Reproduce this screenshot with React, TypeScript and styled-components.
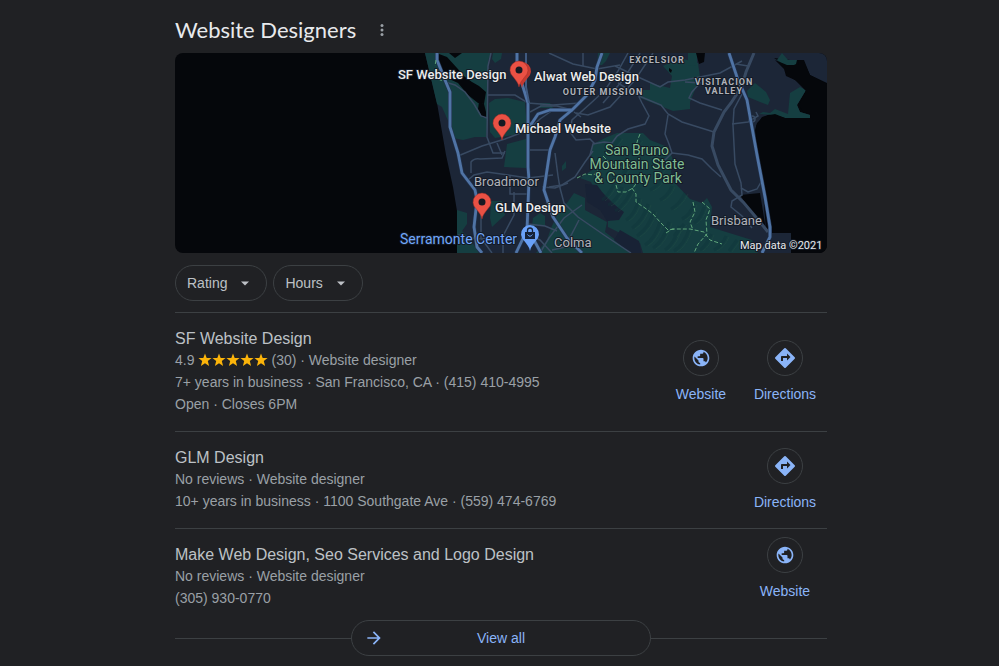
import React from "react";
import styled, { createGlobalStyle } from "styled-components";

const GlobalStyle = createGlobalStyle`
  * { box-sizing: border-box; }
  body {
    margin: 0;
    background: #202124;
    color: #bdc1c6;
    font-family: "Liberation Sans", Arial, sans-serif;
    font-size: 14px;
  }
`;

const Page = styled.main`
  margin: 0 172px 0 175px;
  padding: 12px 0 10px;
`;

const Header = styled.header`
  display: flex;
  align-items: center;
  gap: 14px;
  height: 36px;
  margin-bottom: 5px;
`;

const Heading = styled.h1`
  margin: 0;
  color: #e8eaed;
  font: 400 22px/36px "Google Sans", Lato, sans-serif;
`;

const MenuButton = styled.button`
  display: flex;
  align-items: center;
  justify-content: center;
  width: 24px;
  height: 24px;
  padding: 0;
  border: 0;
  background: none;
  color: #9aa0a6;
`;

const MapFrame = styled.section`
  height: 200px;
  overflow: hidden;
  border-radius: 8px;
  background: #05070b;
`;

const MapSvg = styled.svg`
  display: block;
  width: 100%;
  height: 100%;
  font-family: Roboto, sans-serif;
`;

const Filters = styled.div`
  display: flex;
  gap: 6px;
  padding: 12px 0 11px;
`;

const FilterChip = styled.button`
  display: flex;
  align-items: center;
  gap: 13px;
  height: 36px;
  padding: 0 16px 0 11px;
  border: 1px solid #3c4043;
  border-radius: 18px;
  background: none;
  color: #bdc1c6;
  font: inherit;
`;

const List = styled.ul`
  margin: 0;
  padding: 0;
  list-style: none;
`;

const Row = styled.li`
  display: flex;
  align-items: center;
  border-top: 1px solid #3c4043;
`;

const Info = styled.div<{ $last: boolean }>`
  flex: 1;
  padding: 16px 0 ${(p) => (p.$last ? 0 : 16)}px;
  color: #9aa0a6;
  line-height: 22px;
`;

const Name = styled.h2`
  margin: 0;
  color: #bdc1c6;
  font-size: 16px;
  font-weight: 400;
  line-height: 20px;
`;

const Line = styled.div`
  display: flex;
  align-items: center;
  height: 22px;
  white-space: pre;
`;

const Stars = styled.span`
  display: flex;
  margin: 0 3px 0 4px;
  color: #fbb40a;
`;

const Action = styled.a`
  display: flex;
  flex-direction: column;
  align-items: center;
  gap: 8px;
  width: 84px;
  color: #8ab4f8;
  line-height: 20px;
  text-decoration: none;
`;

const Circle = styled.span`
  display: flex;
  align-items: center;
  justify-content: center;
  width: 36px;
  height: 36px;
  border: 1px solid #3c4043;
  border-radius: 50%;
`;

const Footer = styled.footer`
  display: flex;
  align-items: center;
  margin-top: 11px;

  &::before,
  &::after {
    content: "";
    flex: 1;
    height: 1px;
    background: #3c4043;
  }
`;

const ViewAll = styled.a`
  display: grid;
  grid-template-columns: 20px 1fr 20px;
  align-items: center;
  width: 300px;
  height: 36px;
  padding: 0 12px;
  border: 1px solid #3c4043;
  border-radius: 18px;
  color: #8ab4f8;
  text-align: center;
  text-decoration: none;
`;

const Caret = () => (
  <svg width="10" height="5" viewBox="0 0 10 5" aria-hidden="true">
    <path d="M1 .5h8l-4 4z" fill="currentColor" />
  </svg>
);

const Star = () => (
  <svg width="14" height="14" viewBox="0 0 14 14" aria-hidden="true">
    <path
      d="M7 .4l1.7 4.5 4.9.2-3.8 3 1.3 4.8L7 10.2l-4.1 2.7 1.3-4.8-3.8-3 4.9-.2z"
      fill="currentColor"
    />
  </svg>
);

const Globe = () => (
  <svg width="20" height="20" viewBox="0 0 24 24" fill="currentColor" aria-hidden="true">
    <path d="M12 2C6.48 2 2 6.48 2 12s4.48 10 10 10 10-4.48 10-10S17.52 2 12 2zm-1 17.93c-3.95-.49-7-3.85-7-7.93 0-.62.08-1.21.21-1.79L9 15v1c0 1.1.9 2 2 2v1.93zm6.9-2.54c-.26-.81-1-1.39-1.9-1.39h-1v-3c0-.55-.45-1-1-1H8v-2h2c.55 0 1-.45 1-1V7h2c1.1 0 2-.9 2-2v-.41c2.93 1.19 5 4.06 5 7.41 0 2.08-.8 3.97-2.1 5.39z" />
  </svg>
);

const Turn = () => (
  <svg width="24" height="24" viewBox="0 0 24 24" fill="currentColor" aria-hidden="true">
    <path d="M21.71 11.29l-9-9a.996.996 0 0 0-1.41 0l-9 9a.996.996 0 0 0 0 1.41l9 9c.39.39 1.02.39 1.41 0l9-9a.996.996 0 0 0 0-1.41zM14 14.5V12h-4v3H8v-4c0-.55.45-1 1-1h5V7.5l3.5 3.5-3.5 3.5z" />
  </svg>
);

const Arrow = () => (
  <svg width="20" height="20" viewBox="0 0 24 24" fill="currentColor" aria-hidden="true">
    <path d="M12 4l-1.41 1.41L16.17 11H4v2h12.17l-5.58 5.59L12 20l8-8z" />
  </svg>
);

const PIN =
  "M0 17C-.8 12.5-3.2 10.5-5.5 7.2A9 9 0 1 1 5.5 7.2C3.2 10.5 .8 12.5 0 17z";

const Pin = ({ x, y }: { x: number; y: number }) => (
  <g transform={`translate(${x} ${y})`}>
    <path d={PIN} fill="#ea5144" stroke="#a32e28" strokeWidth="0.5" />
    <circle r="3.5" fill="#151922" />
  </g>
);

const park = "#153e41";
const water = "#05070b";

const trails = [
  "M577 178L585 174L594 175L598 170",
  "M616 185L618 192L626 192L633 188L638 181L643 172",
  "M632 188L636 194L636 202L645 208L653 214L660 222L668 230L675 229",
  "M666 233L672 229L690 229L704 232L710 240L722 244",
  "M693 202L695 212L690 222L693 230",
  "M702 202L710 209L706 220L707 234L698 244L694 253",
  "M603 156L611 164L624 168L640 160",
  "M640 134L638 139L636 146",
];

const ridges =
  "M602 200q8 -6 14 -20M608 205q9 -4 14 -18M615 211q11 -7 18 -24M626 220q9 -5 13 -22M632 228q11 -7 16 -24M637 236q12 -8 17 -25M645 245q10 -6 15 -23M653 248q11 -7 16 -26M665 250q10 -7 14 -24M674 251q10 -6 15 -22M650 190q9 -4 13 -15M660 200q8 -4 12 -14M671 209q9 -5 14 -16M682 219q8 -4 12 -15M694 223q7 -5 10 -16M700 250q7 -5 11 -16M714 250q8 -4 12 -14M729 251l8 -11M606 175l12 -12M620 178l9 -12M630 153l10 -13M610 151l10 -13M655 180l8 -12M674 236l10 -12";

const roads = [
  "M445 82L455 85L465 92L474 104L481 116L487 118",
  "M491 53L488 66L487 137L493 153L505 153",
  "M458 156L482 146L505 139L528 130",
  "M488 95H515L528 103L553 105L580 103",
  "M497 143L502 155",
  "M471 173V162Q474 158 480 159L502 158L505 151",
  "M468 180L474 175L487 172L528 178L553 175",
  "M510 176V194H528",
  "M514 192V215L503 236L503 253",
  "M527 150L552 150M542 187L555 188L568 183",
  "M530 112L541 106L557 106L572 110",
  "M528 130L540 119L553 110",
  "M549 53L573 64L597 69L620 65",
  "M583 53V66",
  "M628 53L618 71L605 90L591 103L572 120L570 132L576 140L590 139L595 144",
  "M653 53L635 80L610 107L588 115L576 113",
  "M640 53L623 80L603 103",
  "M615 66L638 77L660 87L668 82L685 80L720 73L742 61",
  "M618 83L639 96L661 105L668 114L682 122L714 132",
  "M639 97L642 103L649 116L645 124L628 129L617 136L612 143L604 142L593 144L590 155",
  "M574 112L581 117",
  "M668 115L665 134L669 144L672 153L664 161",
  "M672 153L688 155L702 159L712 169L721 177",
  "M555 153L558 176L560 188L564 203L578 217L607 237L631 253",
  "M549 187L562 185L575 177L585 162L593 151",
  "M540 253L549 238L564 218L582 205",
  "M579 220L565 247L552 250",
  "M528 224L545 226L557 231",
  "M528 235L540 240L552 253",
  "M481 209V238L492 253",
  "M458 235L478 239L506 236",
  "M685 82L700 83L692 92L689 98L700 103L722 110",
  "M742 94L734 109L733 125L735 164L741 183L742 195L732 201L731 207L742 216L752 228",
  "M732 124L748 122L758 116L756 112",
  "M741 188L748 192L757 189L761 182",
  "M736 64L748 66",
];

const highways = [
  "M437 53V60L445 80L450 92V127L458 153L462 173L475 190L477 200L474 227L477 247L482 253",
  "M517 53V68L523 87L528 103L528 153V167L529 180L527 230L516 253",
  "M523 133L532 123L538 114L550 110H572L587 95L595 80L597 67L602 53",
  "M572 110L560 120L555 137L550 150L544 190L553 217L567 238L582 253",
  "M729 53L737 77L747 100L753 133L757 155L765 197L770 227V237L762 253",
  "M527 225L535 242L541 253",
];

const MapDrawing = () => (
  <MapSvg viewBox="175 53 652 200" preserveAspectRatio="xMidYMid slice" role="img" aria-label="Map of website designers">
    <path fill="#1c2637" d="M425 53L437 103L446 155L453 187L458 217V253H791V233H770L766 230L763 193L757 155L755 130L757 123L763 117L775 112L785 115H810L800 112L797 105L806 90L800 83L790 77L785 65L774 58L790 60L803 60L810 75L827 83V53z" />
    <g fill={park}>
      <path d="M425 53H491L488 61V118L486 137H475L463 140L453 138L449 123L442 107L437 104z" />
      <path d="M493 53H502L501 59L495 63L492 59z" />
      <path d="M489 103L495 99L508 98L525 102L527 130L513 135L495 138L490 132z" />
      <path d="M507 144L526 139V168L504 167z" />
      <path d="M457 210L467 213V224L462 231L470 239L479 253H457z" />
      <path d="M491 201H502L505 215L492 227L490 218z" />
      <path d="M533 218L540 213L545 216V226H532z" />
      <path d="M590 153L593 144L607 137L617 133H643L650 140L668 147L673 160L671 172L673 181L690 199L702 203L707 198L712 207L710 227L752 240L758 253H643L640 243L608 227V221L623 213L603 193L594 188L591 182L580 178L597 167z" />
      <path d="M574 193L585 198V210L607 222L605 232L633 253H536L547 240L551 228L559 211L567 203z" />
      <path d="M598 53H610L606 61L602 65H597z" />
      <path d="M663 66L680 58L698 63L700 77L690 102L690 109L673 111L640 98L643 90H650V83L670 88L672 76z" />
      <path d="M755 83L766 92L770 100L768 105L760 102L748 97L747 91z" />
      <path d="M759 114L763 112L770 113L775 109L788 114L790 93L800 87L806 90L797 105L800 112L810 115V118L785 118L775 115z" />
      <path d="M782 53L788 60L797 60L796 64L788 68L777 60z" />
      <path d="M688 53H697V65L688 66z" />
      <path d="M540 103H550L553 108H540z" />
      <path d="M562 166L566 161V168L562 171z" />
    </g>
    <path fill="#182235" d="M585 184L597 185L608 200L624 212L619 220L607 221L600 210L587 202zM620 230L639 241L641 253H630L614 240z" />
    <path d={ridges} fill="none" stroke="#0f3439" strokeWidth="3" opacity=".4" />
    <path d={ridges} fill="none" stroke="#235047" strokeWidth="1" opacity=".4" transform="translate(3 1)" />
    <g fill={water}>
      <path d="M439 54L447 57L457 68L465 77L472 82L479 86L486 92L484 104L478 103L468 95L458 83L445 77L440 67L438 59z" />
      <path d="M479 102L484 104L486 112V118L482 117L478 109z" />
      <path d="M449 53H462L455 58z" />
      <path d="M740 195L760 193L766 230L752 213z" />
      <path d="M696 53H705L704 62L699 64z" />
      <path d="M765 195L758 155L756 126L762 117L775 114L785 118H810L811 114L803 112L799 105L806 91L801 86L795 80L786 76L784 69L775 60L787 65H798L799 60L804 60L810 75L827 84V253H791V233H773z" />
      <path d="M669 68l3 2-1 3-2-2z" />
    </g>
    <g fill="none" stroke="#384a62" strokeWidth="1.5">
      {roads.map((d) => <path key={d} d={d} />)}
      <path strokeWidth="3" d="M754 53L746 72L742 86L731 103L724 112L714 132L712 146L718 165L731 190L744 203L760 222L768 232" />
      <circle cx="752" cy="119" r="3" />
    </g>
    <g fill="none" strokeLinejoin="round">
      {highways.map((d) => <path key={d} d={d} stroke="#22334f" strokeWidth="4" />)}
      {highways.map((d) => <path key={d} d={d} stroke="#5074a5" strokeWidth="2.8" />)}
    </g>
    <path d="M526 53V87L529 103" fill="none" stroke="#405a80" strokeWidth="2" />
    <g fill="none" stroke="#61a67b" strokeWidth="1" strokeDasharray="4 2">
      {trails.map((d) => <path key={d} d={d} />)}
      <path d="M436 60L435 66M438 79L443 81" />
    </g>

    <path d={PIN} fill="#c43a31" transform="translate(522 71)" />
    <Pin x={519} y={70} />
    <Pin x={502} y={123} />
    <Pin x={482} y={202} />
    <g transform="translate(530 234)">
      <path d={PIN} fill="#69a1f8" />
      <path d="M-5-2H5V5H-5z" fill="#152238" />
      <path d="M-2.5-2V-3.5A2.5 2.5 0 0 1 2.5-3.5V-2" fill="none" stroke="#152238" strokeWidth="1.3" />
      <path d="M-2.5 .5Q0 4 2.5 .5" fill="none" stroke="#69a1f8" />
    </g>

    <g stroke="#131a26" strokeWidth="2" strokeLinejoin="round" paintOrder="stroke">
      <g fill="#eceded" fontSize="13" fontWeight="500">
        <text x="398" y="79">SF Website Design</text>
        <text x="534" y="81">Alwat Web Design</text>
        <text x="515" y="133">Michael Website</text>
        <text x="495" y="212">GLM Design</text>
      </g>
      <g fill="#b0b3b9" fontSize="13">
        <text x="474" y="186">Broadmoor</text>
        <text x="554" y="247">Colma</text>
        <text x="711" y="225">Brisbane</text>
      </g>
      <text x="400" y="244" fill="#71a7fa" fontSize="14">Serramonte Center</text>
      <g fill="#80bd92" fontSize="14" textAnchor="middle">
        <text x="637" y="155">San Bruno</text>
        <text x="637" y="169">Mountain State</text>
        <text x="638" y="183">&amp; County Park</text>
      </g>
      <g fill="#b0b3b9" fontSize="9" fontWeight="700" letterSpacing="1" textAnchor="middle">
        <text x="657" y="63">EXCELSIOR</text>
        <text x="603" y="95">OUTER MISSION</text>
        <text x="724" y="85">VISITACION</text>
        <text x="724" y="94">VALLEY</text>
      </g>
      <text x="740" y="249" fill="#e8eaed" fontSize="11">Map data ©2021</text>
    </g>
  </MapSvg>
);

type ActionKind = "Website" | "Directions";

interface Business {
  name: string;
  rating?: string;
  reviews: string;
  lines: string[];
  actions: ActionKind[];
}

const businesses: Business[] = [
  {
    name: "SF Website Design",
    rating: "4.9",
    reviews: "(30)",
    lines: ["7+ years in business · San Francisco, CA · (415) 410-4995", "Open · Closes 6PM"],
    actions: ["Website", "Directions"],
  },
  {
    name: "GLM Design",
    reviews: "No reviews",
    lines: ["10+ years in business · 1100 Southgate Ave · (559) 474-6769"],
    actions: ["Directions"],
  },
  {
    name: "Make Web Design, Seo Services and Logo Design",
    reviews: "No reviews",
    lines: ["(305) 930-0770"],
    actions: ["Website"],
  },
];

export default function App() {
  return (
    <>
      <GlobalStyle />
      <Page>
        <Header>
          <Heading>Website Designers</Heading>
          <MenuButton aria-label="About these results">
            <svg width="4" height="12" viewBox="0 0 4 12" fill="currentColor" aria-hidden="true">
              <circle cx="2" cy="1.5" r="1.5" />
              <circle cx="2" cy="6" r="1.5" />
              <circle cx="2" cy="10.5" r="1.5" />
            </svg>
          </MenuButton>
        </Header>
        <MapFrame>
          <MapDrawing />
        </MapFrame>
        <Filters>
          {["Rating", "Hours"].map((label) => (
            <FilterChip key={label} aria-haspopup="listbox">
              {label}
              <Caret />
            </FilterChip>
          ))}
        </Filters>
        <List>
          {businesses.map((b, i) => (
            <Row key={b.name}>
              <Info $last={i === businesses.length - 1}>
                <Name>{b.name}</Name>
                <Line>
                  {b.rating}
                  {b.rating && (
                    <Stars role="img" aria-label={`Rated ${b.rating} out of 5`}>
                      {[1, 2, 3, 4, 5].map((n) => <Star key={n} />)}
                    </Stars>
                  )}
                  {`${b.reviews} · Website designer`}
                </Line>
                {b.lines.map((line) => <Line key={line}>{line}</Line>)}
              </Info>
              {b.actions.map((kind) => (
                <Action key={kind} href="#">
                  <Circle>{kind === "Website" ? <Globe /> : <Turn />}</Circle>
                  {kind}
                </Action>
              ))}
            </Row>
          ))}
        </List>
        <Footer>
          <ViewAll href="#">
            <Arrow />
            View all
          </ViewAll>
        </Footer>
      </Page>
    </>
  );
}
